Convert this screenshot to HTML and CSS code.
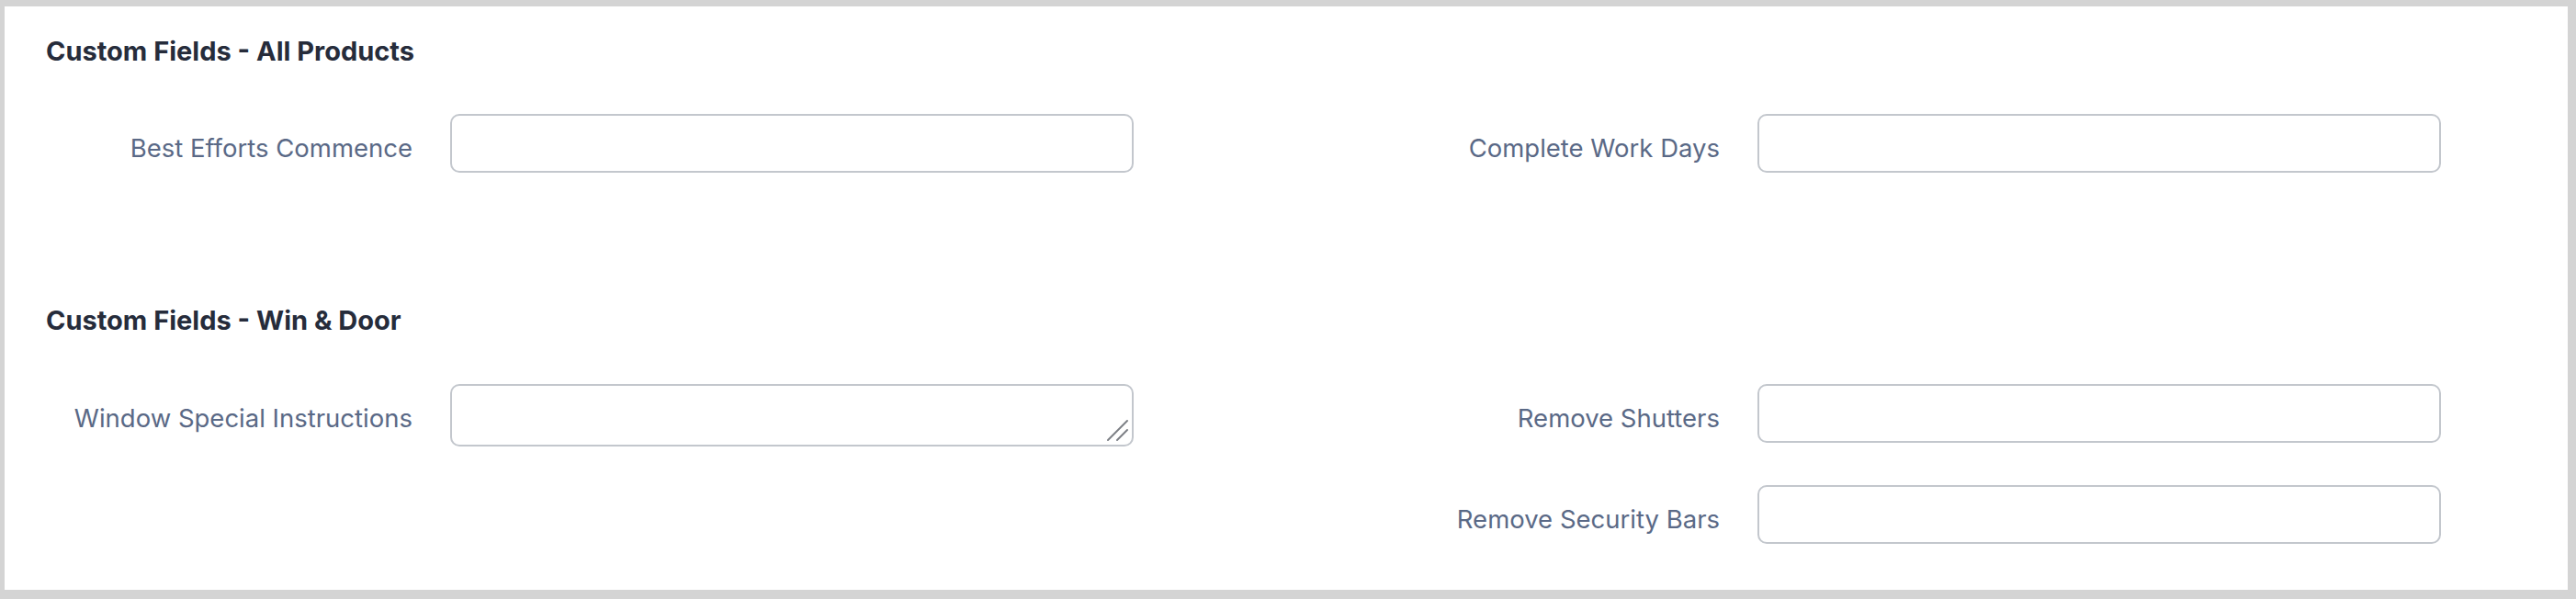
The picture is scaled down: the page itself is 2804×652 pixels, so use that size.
FILE: index.html
```html
<!DOCTYPE html>
<html lang="en">
<head>
<meta charset="utf-8">
<title>Custom Fields</title>
<link rel="stylesheet" href="styles.css">
</head>
<body>
<div class="card">
  <section class="section section-first">
    <h2 class="section-title">Custom Fields - All Products</h2>
    <div class="fields">
      <div class="field">
        <label class="field-label">Best Efforts Commence</label>
        <input class="field-input" type="text">
      </div>
      <div class="field">
        <label class="field-label">Complete Work Days</label>
        <input class="field-input" type="text">
      </div>
    </div>
  </section>
  <section class="section">
    <h2 class="section-title">Custom Fields - Win &amp; Door</h2>
    <div class="fields">
      <div class="field">
        <label class="field-label">Window Special Instructions</label>
        <div class="textarea-wrap">
          <textarea class="field-input field-textarea"></textarea>
          <svg class="grip" width="26" height="26" viewBox="0 0 26 26" aria-hidden="true">
            <line x1="24" y1="3" x2="3" y2="24" stroke="#7c7f85" stroke-width="2" stroke-linecap="round"/>
            <line x1="24" y1="13" x2="13" y2="24" stroke="#7c7f85" stroke-width="2" stroke-linecap="round"/>
          </svg>
        </div>
      </div>
      <div class="field">
        <label class="field-label">Remove Shutters</label>
        <input class="field-input" type="text">
      </div>
      <div class="field field-col2">
        <label class="field-label">Remove Security Bars</label>
        <input class="field-input" type="text">
      </div>
    </div>
  </section>
</div>
</body>
</html>
```

FILE: styles.css
```css
html, body {
  margin: 0;
  padding: 0;
}
body {
  background: #d4d4d4;
  font-family: "Inter", "Liberation Sans", sans-serif;
  padding: 7px 9px 10px 5px;
  box-sizing: border-box;
  height: 652px;
}
.card {
  background: #ffffff;
  height: 635px;
  box-sizing: border-box;
  padding: 30px 0 0 45px;
}
.section-title {
  margin: 0;
  font-size: 29px;
  line-height: 38px;
  font-weight: 700;
  color: #262c3b;
  letter-spacing: 0;
}
.section-first {
  margin-bottom: 137px;
}
.fields {
  margin-top: 49px;
  display: grid;
  grid-template-columns: 1423px 1fr;
  row-gap: 41px;
  align-items: start;
}
.section + .section .fields {
  margin-top: 50px;
}
.field {
  display: flex;
  align-items: flex-start;
}
.field-col2 {
  grid-column: 2;
}
.field-label {
  width: 399px;
  flex: none;
  margin-right: 41px;
  text-align: right;
  font-size: 27.5px;
  line-height: 64px;
  padding-top: 5px;
  color: #5a6986;
  letter-spacing: 0;
}
.field-input {
  width: 744px;
  height: 64px;
  box-sizing: border-box;
  border: 2px solid #c3c7cd;
  border-radius: 10px;
  background: #fff;
  margin: 0;
  padding: 0 16px;
  font: inherit;
  outline: none;
}
.textarea-wrap {
  position: relative;
  width: 744px;
  height: 68px;
}
.field-textarea {
  height: 68px;
  resize: none;
  display: block;
}
.grip {
  position: absolute;
  right: 5px;
  bottom: 5px;
}
```
